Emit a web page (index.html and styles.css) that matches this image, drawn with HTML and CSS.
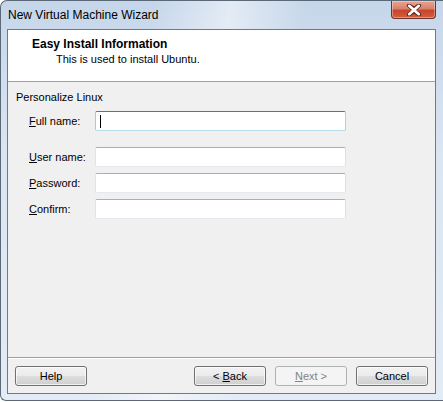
FILE: index.html
```html
<!DOCTYPE html>
<html>
<head>
<meta charset="utf-8">
<link rel="stylesheet" href="styles.css">
</head>
<body>
<div class="window">
  <div class="titlebar">
    <span class="title">New Virtual Machine Wizard</span>
    <span class="close">
      <svg width="16" height="12" viewBox="0 0 16 12">
        <path d="M3 1.5 L8 5 L13 1.5 M3 10.5 L8 7 L13 10.5 M3 1.5 L13 10.5 M13 1.5 L3 10.5" stroke="#5a2a20" stroke-width="4.2" fill="none" stroke-linecap="round"/>
        <path d="M3.2 1.8 L12.8 10.2 M12.8 1.8 L3.2 10.2" stroke="#ffffff" stroke-width="2.6" fill="none" stroke-linecap="round"/>
      </svg>
    </span>
  </div>
  <div class="client">
    <div class="header">
      <div class="h-title">Easy Install Information</div>
      <div class="h-sub">This is used to install Ubuntu.</div>
    </div>
    <div class="body">
      <div class="group">Personalize Linux</div>
      <div class="row row-first">
        <span class="label"><u>F</u>ull name:</span>
        <span class="field focused"><span class="caret"></span></span>
      </div>
      <div class="row row-gap">
        <span class="label"><u>U</u>ser name:</span>
        <span class="field"></span>
      </div>
      <div class="row">
        <span class="label"><u>P</u>assword:</span>
        <span class="field"></span>
      </div>
      <div class="row">
        <span class="label"><u>C</u>onfirm:</span>
        <span class="field"></span>
      </div>
    </div>
    <div class="footer">
      <span class="btn"><span>Help</span></span>
      <span class="spacer"></span>
      <span class="btn"><span>&lt; <u>B</u>ack</span></span>
      <span class="btn disabled"><span><u>N</u>ext &gt;</span></span>
      <span class="btn"><span>Cancel</span></span>
    </div>
  </div>
</div>
</body>
</html>
```

FILE: styles.css
```css
html, body {
  margin: 0;
  padding: 0;
  background: #ffffff;
}
body {
  width: 443px;
  height: 402px;
  overflow: hidden;
  font-family: "Liberation Sans", Arial, sans-serif;
  font-size: 11px;
  color: #000;
}
.window {
  box-sizing: border-box;
  width: 443px;
  height: 401px;
  border: 1px solid #5b6878;
  border-right: none;
  border-radius: 7px 0 0 6px;
  background:
    linear-gradient(100deg, rgba(255,255,255,0) 0%, rgba(255,255,255,0) 30%, rgba(255,255,255,0.5) 45%, rgba(255,255,255,0) 60%),
    linear-gradient(180deg, #c6d6ea 0%, #dbe6f2 40%, #e3ebf5 100%);
  padding: 0 7px 6px 6px;
  display: flex;
  flex-direction: column;
}
.titlebar {
  height: 28px;
  display: flex;
  align-items: flex-start;
  justify-content: space-between;
}
.title {
  margin-top: 7px;
  margin-left: 1px;
  font-size: 12px;
  color: #000;
}
.close {
  width: 45px;
  height: 18px;
  box-sizing: border-box;
  border: 1px solid #6b3428;
  border-top: none;
  border-radius: 0 0 4px 4px;
  background: linear-gradient(180deg, #e8a493 0%, #d9816b 45%, #c7452b 55%, #d2603f 100%);
  display: flex;
  align-items: center;
  justify-content: center;
  box-shadow: inset 0 0 0 1px rgba(255,255,255,0.35);
}
.client {
  flex: 1;
  border: 1px solid #6d7a8a;
  background: #f0f0f0;
  display: flex;
  flex-direction: column;
}
.header {
  height: 52px;
  box-sizing: border-box;
  background: #ffffff;
  border-bottom: 1px solid #a0a0a0;
  padding: 7px 0 0 24px;
}
.h-title {
  font-weight: bold;
  font-size: 12px;
  line-height: 15px;
}
.h-sub {
  margin-left: 24px;
  line-height: 15px;
}
.body {
  flex: 1;
  padding: 8px 0 0 8px;
}
.group {
  line-height: 14px;
}
.row {
  display: flex;
  align-items: center;
  height: 20px;
  margin-top: 6px;
}
.row-first {
  margin-top: 7px;
}
.row-gap {
  margin-top: 16px;
}
.label {
  width: 66px;
  margin-left: 13px;
}
.field {
  box-sizing: border-box;
  width: 251px;
  height: 20px;
  background: #fff;
  border: 1px solid;
  border-color: #abadb3 #dbdfe6 #e3e9ef #e2e3ea;
  border-radius: 2px;
  display: flex;
  align-items: center;
}
.field.focused {
  border-color: #3d7bad #b5cfe7 #b7d9ed #a4c9e3;
}
.caret {
  width: 1px;
  height: 13px;
  background: #000;
  margin-left: 4px;
}
.footer {
  height: 36px;
  box-sizing: border-box;
  border-top: 1px solid #a0a0a0;
  box-shadow: inset 0 1px 0 #ffffff;
  display: flex;
  align-items: flex-start;
  padding: 8px 7px 0 7px;
  gap: 9px;
}
.spacer {
  flex: 1;
}
.btn {
  box-sizing: border-box;
  width: 72px;
  height: 20px;
  border: 1px solid #707070;
  border-radius: 3px;
  background: linear-gradient(180deg, #f2f2f2 0%, #ebebeb 48%, #dddddd 52%, #cfcfcf 100%);
  box-shadow: inset 0 0 0 1px rgba(255,255,255,0.7);
  display: flex;
  align-items: center;
  justify-content: center;
  font-size: 11px;
}
.btn.disabled {
  border-color: #adb2b5;
  background: #f4f4f4;
  color: #838383;
  box-shadow: none;
}
```
